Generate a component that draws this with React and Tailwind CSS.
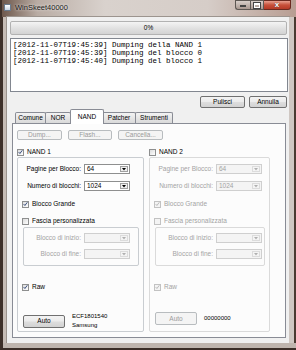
import React from 'react'

const Check = ({ checked, disabled, label, className = '' }) => (
  <div className={`flex items-center h-[8px] ${className}`}>
    <div
      className={`w-[7px] h-[7px] border flex items-center justify-center ${
        disabled ? 'border-[#c2c2c2] bg-[#f4f4f4]' : 'border-[#8e8f8f] bg-[linear-gradient(135deg,#dcdcdc,#ffffff)]'
      }`}
    >
      {checked && (
        <svg width="6" height="6" viewBox="0 0 6 6">
          <path
            d="M0.8 3.1 L2.3 4.8 L5.2 0.9"
            fill="none"
            stroke={disabled ? '#b5b5b5' : '#2a3f73'}
            strokeWidth="1.1"
          />
        </svg>
      )}
    </div>
    <span className={`ml-[3px] text-[6.5px] leading-[8px] ${disabled ? 'text-[#a3a3a3]' : 'text-black'}`}>{label}</span>
  </div>
)

const Combo = ({ value, disabled, w }) => (
  <div
    className={`flex h-[10px] ${w} border ${
      disabled ? 'border-[#cfcfcf] bg-[#f4f4f4] text-[#a3a3a3]' : 'border-[#8e8f8f] bg-white text-black'
    }`}
  >
    <span className="flex-1 pl-[2px] text-[6.5px] leading-[8px]">{value}</span>
    <span
      className={`w-[8px] m-[1px] ml-0 flex items-center justify-center border ${
        disabled ? 'border-[#dcdcdc] bg-[#f4f4f4]' : 'border-[#a0a0a0] bg-[#efefef]'
      }`}
    >
      <svg width="4" height="3" viewBox="0 0 4 3">
        <path d="M0 0 H4 L2 2.5 Z" fill={disabled ? '#b0b0b0' : '#000'} />
      </svg>
    </span>
  </div>
)

const Btn = ({ children, disabled, className = '' }) => (
  <div
    className={`flex items-center justify-center rounded-[2px] border text-[6.5px] leading-[8px] ${
      disabled
        ? 'border-[#b8bcbf] bg-[#f4f4f4] text-[#9a9a9a]'
        : 'border-[#707070] bg-[linear-gradient(#f3f3f3,#ececec_45%,#dddddd_55%,#d2d2d2)] text-black'
    } ${className}`}
  >
    {children}
  </div>
)

const Row = ({ label, labelW, children, disabled, className = '' }) => (
  <div className={`flex items-center ${className}`}>
    <span
      className={`${labelW} text-right text-[6.5px] leading-[8px] ${disabled ? 'text-[#a3a3a3]' : 'text-black'}`}
    >
      {label}
    </span>
    <div className="ml-[3px]">{children}</div>
  </div>
)

function NandGroup({ disabled, w, comboW, lines }) {
  const line = disabled ? 'border-[#dadada]' : 'border-[#c9cdd1]'
  return (
    <div className={`${w} h-[175px] border ${line} rounded-[2px] flex flex-col`}>
      <Row label="Pagine per Blocco:" labelW="w-[63px]" disabled={disabled} className="mt-[6px]">
        <Combo value="64" disabled={disabled} w={comboW} />
      </Row>
      <Row label="Numero di blocchi:" labelW="w-[63px]" disabled={disabled} className="mt-[7px]">
        <Combo value="1024" disabled={disabled} w={comboW} />
      </Row>
      <Check checked disabled={disabled} label="Blocco Grande" className="mt-[9px] ml-[4px]" />
      <Check disabled={disabled} label="Fascia personalizzata" className="mt-[9px] ml-[4px]" />
      <div className={`mt-[2px] ml-[5px] mr-[4px] h-[39px] border ${line} rounded-[2px] flex flex-col`}>
        <Row label="Blocco di inizio:" labelW="w-[57px]" disabled className="mt-[5px]">
          <Combo value="" disabled w="w-[46px]" />
        </Row>
        <Row label="Blocco di fine:" labelW="w-[57px]" disabled className="mt-[6px]">
          <Combo value="" disabled w="w-[46px]" />
        </Row>
      </div>
      <Check checked disabled={disabled} label="Raw" className="mt-[17px] ml-[4px]" />
      <div className="flex items-center mt-[21px] ml-[5px]">
        <Btn disabled={disabled} className="w-[42px] h-[13px]">Auto</Btn>
        <div className="ml-[7px] text-[6px] leading-[9px] text-black">
          {lines.map((l) => (
            <div key={l}>{l}</div>
          ))}
        </div>
      </div>
    </div>
  )
}

const Tab = ({ label, w, active }) =>
  active ? (
    <div
      className={`${w} h-[15px] -mx-[1px] -mb-[1px] relative z-10 border border-b-0 border-[#898c95] bg-white flex items-center justify-center text-[6.5px] text-black rounded-t-[2px]`}
    >
      {label}
    </div>
  ) : (
    <div
      className={`${w} h-[11px] border border-b-0 border-[#898c95] -ml-[1px] first:ml-0 bg-[linear-gradient(#f3f3f3,#e6e6e6_50%,#d9d9d9)] flex items-center justify-center text-[6.5px] text-black rounded-t-[2px]`}
    >
      {label}
    </div>
  )

export default function App() {
  return (
    <div className="w-[296px] h-[350px] flex flex-col overflow-hidden bg-[#c4bab3] font-['Liberation_Sans',Arial,sans-serif]">
      {/* Title bar */}
      <div className="h-[17px] flex items-start bg-[linear-gradient(to_right,#6e584c,#b9aca4_12%,#d9d2cd_35%,#d6cdc8_70%,#b89d92)] border-l-[2px] border-l-[#3e3029]">
        <div className="mt-[4px] ml-[2px] w-[7px] h-[7px] border border-[#6a7a8c] bg-[linear-gradient(#ffffff,#c8d4e2)]" />
        <span className="ml-[4px] mt-[3px] text-[7.5px] leading-[9px] text-[#1b1b1b] [text-shadow:0_0_3px_#ffffff]">
          WinSkeet40000
        </span>
        <div className="ml-auto mr-[5px] flex">
          <div className="w-[15px] h-[10px] border border-[#5d5753] border-r-0 rounded-bl-[3px] bg-[linear-gradient(#d8cfca,#a99890)] flex items-end justify-center pb-[2px]">
            <div className="w-[6px] h-[2px] bg-white border border-[#444]" />
          </div>
          <div className="w-[14px] h-[10px] border border-[#5d5753] bg-[linear-gradient(#d8cfca,#a99890)] flex items-center justify-center">
            <div className="w-[6px] h-[5px] border border-white border-t-2 outline outline-[#444] outline-1" />
          </div>
          <div className="w-[27px] h-[10px] border border-[#6b2a20] border-l-0 rounded-br-[3px] bg-[linear-gradient(#e8a090,#c7503a_50%,#b53a26)] flex items-center justify-center">
            <span className="text-[8px] leading-[8px] font-bold text-white [text-shadow:0_0_1px_#333]">x</span>
          </div>
        </div>
      </div>

      <div className="flex h-[326px]">
        <div className="w-[7px] border-l-[3px] border-l-[#3e3029] bg-[#c6bcb5]" />

        {/* Client */}
        <div className="w-[282px] bg-[#f0f0f0] flex flex-col shadow-[0_0_0_1px_#9c948e]">
          {/* progress */}
          <div className="mt-[4px] ml-[3px] w-[277px] h-[14px] rounded-[2px] border border-[#b2b2b2] bg-[linear-gradient(#f4f4f4,#e2e2e2_50%,#d3d3d3)] flex items-center justify-center text-[6.5px] text-black">
            0%
          </div>

          {/* log */}
          <div className="mt-[3px] ml-[3px] w-[278px] h-[54px] border border-[#828790] bg-white pt-[2px] pl-[2px] font-['Liberation_Mono',monospace] text-[7.5px] leading-[8px] text-black whitespace-pre">
            <div>[2012-11-07T19:45:39] Dumping della NAND 1</div>
            <div>[2012-11-07T19:45:39] Dumping del blocco 0</div>
            <div>[2012-11-07T19:45:40] Dumping del blocco 1</div>
          </div>

          {/* buttons */}
          <div className="mt-[4px] flex justify-end pr-[2px] gap-[4px]">
            <Btn className="w-[45px] h-[12px]">Pulisci</Btn>
            <Btn className="w-[38px] h-[12px]">Annulla</Btn>
          </div>

          {/* tabs */}
          <div className="mt-[1px] ml-[8px] h-[14px] flex items-end">
            <Tab label="Comune" w="w-[31px]" />
            <Tab label="NOR" w="w-[26px]" />
            <Tab label="NAND" w="w-[34px]" active />
            <Tab label="Patcher" w="w-[34px]" />
            <Tab label="Strumenti" w="w-[38px]" />
          </div>

          {/* panel */}
          <div className="ml-[5px] w-[274px] h-[215px] border border-[#898c95] bg-[#fcfcfc] flex flex-col">
            <div className="mt-[6px] ml-[4px] flex gap-[6px]">
              <Btn disabled className="w-[45px] h-[10px]">Dump...</Btn>
              <Btn disabled className="w-[44px] h-[10px]">Flash...</Btn>
              <Btn disabled className="w-[45px] h-[10px]">Cancella...</Btn>
            </div>

            <div className="mt-[8px] ml-[4px] flex">
              <div className="w-[132px] flex flex-col">
                <Check checked label="NAND 1" />
                <div className="mt-[1px]">
                  <NandGroup w="w-[127px]" comboW="w-[46px]" lines={['ECF1801540', 'Samsung']} />
                </div>
              </div>
              <div className="flex flex-col">
                <Check label="NAND 2" />
                <div className="mt-[1px]">
                  <NandGroup disabled w="w-[121px]" comboW="w-[46px]" lines={['00000000']} />
                </div>
              </div>
            </div>
          </div>
        </div>

        <div className="w-[7px] border-r-[2px] border-r-[#4a3a31] bg-[#cfc7c2]" />
      </div>

      <div className="h-[7px] bg-[#bfb5ae] border-b-[2px] border-b-[#3b2e28] border-l-[3px] border-l-[#3e3029]" />
    </div>
  )
}
